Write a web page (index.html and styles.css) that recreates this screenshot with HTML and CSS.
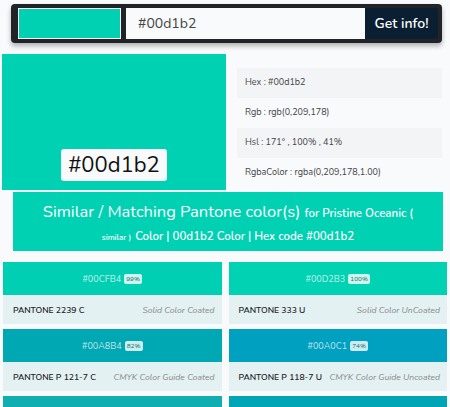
FILE: index.html
```html
<!DOCTYPE html>
<html>
<head>
<meta charset="utf-8">
<link rel="stylesheet" href="styles.css">
</head>
<body>
<div class="search">
  <div class="pick"></div>
  <div class="input">#00d1b2</div>
  <div class="btn">Get info!</div>
</div>
<div class="top">
  <div class="big"><span class="label">#00d1b2</span></div>
  <div class="info">
    <div class="row alt">Hex : #00d1b2</div>
    <div class="row">Rgb : rgb(0,209,178)</div>
    <div class="row alt">Hsl : 171° , 100% , 41%</div>
    <div class="row">RgbaColor : rgba(0,209,178,1.00)</div>
  </div>
</div>
<div class="heading">
  <span class="h-big">Similar / Matching Pantone color(s)</span> <span class="h-mid">for Pristine Oceanic (</span><br><span class="h-small">similar )</span> <span class="h-mid">Color | 00d1b2 Color | Hex code #00d1b2</span>
</div>
<div class="cards">
  <div class="card">
    <div class="chip" style="background:#00CFB4">#00CFB4 <span class="pct">99%</span></div>
    <div class="meta"><span class="name">PANTONE 2239 C</span><span class="kind">Solid Color Coated</span></div>
  </div>
  <div class="card">
    <div class="chip" style="background:#00D2B3">#00D2B3 <span class="pct">100%</span></div>
    <div class="meta"><span class="name">PANTONE 333 U</span><span class="kind">Solid Color UnCoated</span></div>
  </div>
  <div class="card">
    <div class="chip" style="background:#00A8B4">#00A8B4 <span class="pct">82%</span></div>
    <div class="meta"><span class="name">PANTONE P 121-7 C</span><span class="kind">CMYK Color Guide Coated</span></div>
  </div>
  <div class="card">
    <div class="chip" style="background:#00A0C1">#00A0C1 <span class="pct">74%</span></div>
    <div class="meta"><span class="name">PANTONE P 118-7 U</span><span class="kind">CMYK Color Guide Uncoated</span></div>
  </div>
  <div class="card">
    <div class="chip" style="background:#10ADB1"></div>
  </div>
  <div class="card">
    <div class="chip" style="background:#00A5B5"></div>
  </div>
</div>
</body>
</html>
```
FILE: styles.css
```css
* { box-sizing: border-box; }
body {
  margin: 0;
  background: #f8fafc;
  font-family: "Nunito", "Lato", "Noto Sans", sans-serif;
  color: #333;
  overflow: hidden;
}
.search {
  margin: 4px 8px 0 11px;
  height: 39px;
  background: #212327;
  border-radius: 4px;
  display: flex;
  padding: 4px 4px 4px 7px;
  box-shadow: 0 3px 5px rgba(0,0,0,0.3);
}
.pick {
  width: 103px;
  height: 31px;
  border: 1px solid #fff;
  background: #00d1b2;
}
.input {
  flex: 1;
  margin-left: 5px;
  background: #f8fafc;
  color: #444;
  font-size: 14px;
  line-height: 31px;
  padding-left: 12px;
}
.btn {
  width: 73px;
  background: #0b1f33;
  color: #fff;
  font-size: 14px;
  font-weight: 600;
  line-height: 31px;
  text-align: center;
  border-radius: 0 2px 2px 0;
}
.top {
  margin: 11px 8px 0 2px;
  display: grid;
  grid-template-columns: 224px 1fr;
}
.big {
  height: 136px;
  background: #00d1b2;
  display: flex;
  align-items: flex-end;
  justify-content: center;
  padding-bottom: 9px;
}
.label {
  background: #f8fafc;
  border-radius: 3px;
  width: 106px;
  height: 32px;
  font-size: 22px;
  line-height: 32px;
  text-align: center;
  color: #111;
}
.info {
  padding: 14px 0 0 11px;
}
.row {
  height: 30px;
  line-height: 28px;
  font-size: 9px;
  color: #444;
  padding-left: 8px;
}
.row.alt { background: #f2f4f6; }
.heading {
  margin: 2px 7px 0 13px;
  height: 59px;
  background: #00d1b2;
  color: #fff;
  text-align: center;
  padding-top: 9px;
  line-height: 22px;
}
.h-big { font-size: 16.5px; }
.h-mid { font-size: 11.5px; font-weight: 600; }
.h-small { font-size: 8px; font-weight: 600; }
.cards {
  margin-top: 11px;
  padding: 0 3px;
  display: grid;
  grid-template-columns: minmax(0, 1fr) minmax(0, 1fr);
  column-gap: 7px;
  row-gap: 5px;
}
.card { height: 62px; min-width: 0; }
.chip {
  height: 33px;
  color: rgba(255,255,255,0.75);
  font-size: 9px;
  display: flex;
  align-items: center;
  justify-content: center;
  gap: 3px;
}
.pct {
  background: rgba(255,255,255,0.8);
  color: #2a6a66;
  font-size: 6.5px;
  padding: 1px 2px;
  border-radius: 2px;
  line-height: 8px;
}
.meta {
  height: 29px;
  background: #e3f1f3;
  display: flex;
  align-items: center;
  justify-content: space-between;
  gap: 6px;
  padding: 0 7px 0 10px;
  font-size: 8.6px;
  white-space: nowrap;
  overflow: hidden;
}
.name { color: #222; font-weight: 600; }
.kind { color: #888; font-style: italic; }
```
